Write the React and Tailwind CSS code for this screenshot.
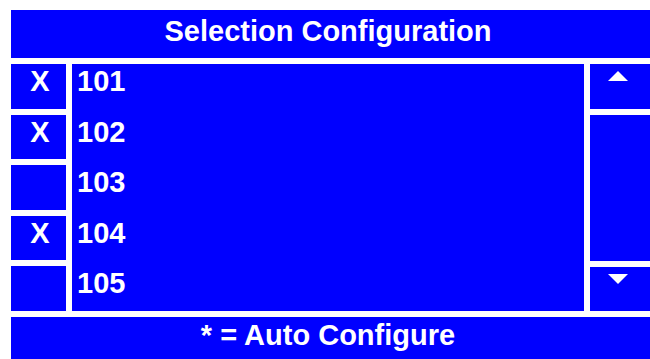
const rows = [
    { id: "101", marked: true },
    { id: "102", marked: true },
    { id: "103", marked: false },
    { id: "104", marked: true },
    { id: "105", marked: false },
];

function Arrow({ dir }) {
    return (
        <svg width="20" height="10" viewBox="0 0 20 10">
            {dir === "up"
                ? <polygon points="10,0 20,10 0,10" fill="#ffffff" />
                : <polygon points="0,0 20,0 10,10" fill="#ffffff" />}
        </svg>
    );
}

export default function App() {
    return (
        <div className="w-[650px] h-[359px] overflow-hidden bg-white pl-[11px] pt-[10px] flex flex-col gap-[6px] font-['Liberation_Sans',Arial,sans-serif] font-bold text-white text-[29px] leading-none">
            <div className="h-[48px] shrink-0 bg-[#0000ff] flex justify-center pt-[7px] pr-[5px]">
                Selection Configuration
            </div>

            <div className="h-[247px] shrink-0 flex gap-[6px]">
                <div className="w-[55px] flex flex-col gap-[6px]">
                    {rows.map((r) => (
                        <div key={r.id} className="flex-1 bg-[#0000ff] flex justify-center pt-[3px] pl-[3px]">
                            {r.marked ? "X" : ""}
                        </div>
                    ))}
                </div>

                <div className="w-[512px] bg-[#0000ff] flex flex-col gap-[6px]">
                    {rows.map((r) => (
                        <div key={r.id} className="flex-1 pt-[3px] pl-[5px]">
                            {r.id}
                        </div>
                    ))}
                </div>

                <div className="flex-1 flex flex-col gap-[6px]">
                    <div className="h-[45px] bg-[#0000ff] flex justify-center pt-[7px] pr-[4px]">
                        <Arrow dir="up" />
                    </div>
                    <div className="flex-1 bg-[#0000ff]"></div>
                    <div className="h-[44px] bg-[#0000ff] flex justify-center pt-[7px] pr-[4px]">
                        <Arrow dir="down" />
                    </div>
                </div>
            </div>

            <div className="flex-1 bg-[#0000ff] flex justify-center pt-[4px] pr-[5px]">
                * = Auto Configure
            </div>
        </div>
    );
}
